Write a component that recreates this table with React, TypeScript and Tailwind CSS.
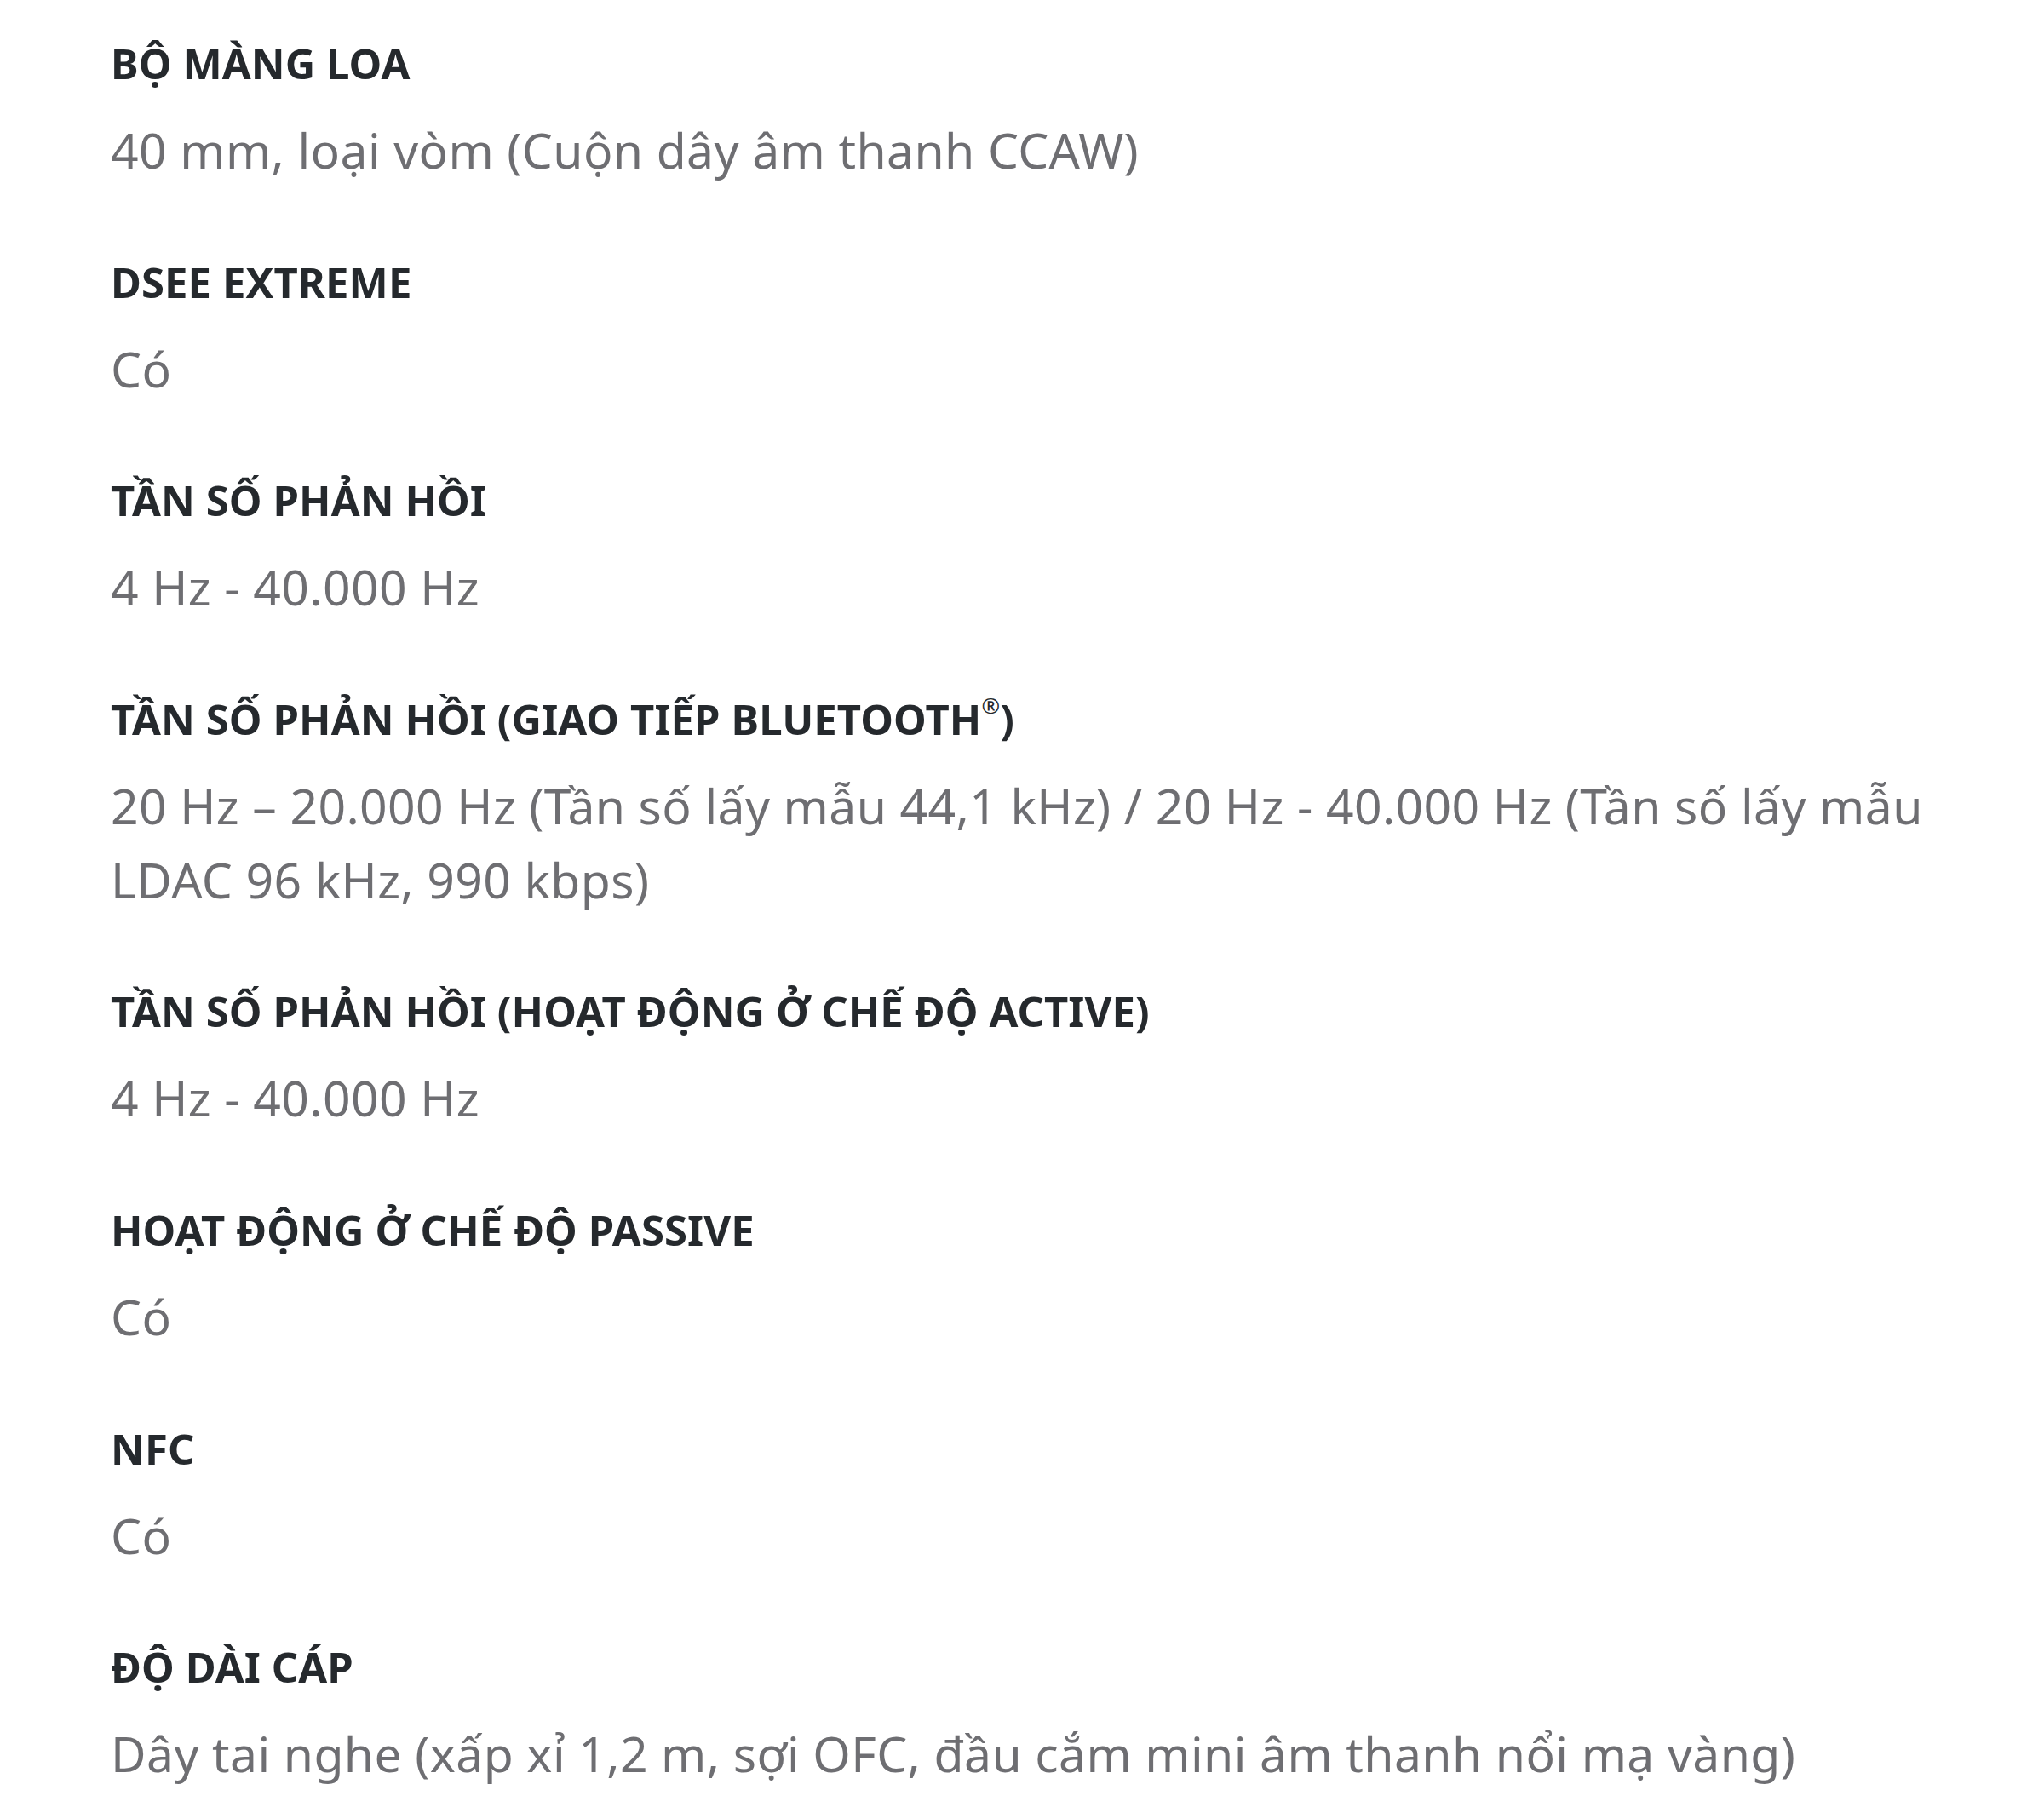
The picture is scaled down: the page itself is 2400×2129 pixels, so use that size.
const specs: { label: React.ReactNode; value: string }[] = [
  { label: "BỘ MÀNG LOA", value: "40 mm, loại vòm (Cuộn dây âm thanh CCAW)" },
  { label: "DSEE EXTREME", value: "Có" },
  { label: "TẦN SỐ PHẢN HỒI", value: "4 Hz - 40.000 Hz" },
  {
    label: (
      <>
        TẦN SỐ PHẢN HỒI (GIAO TIẾP BLUETOOTH<sup className="text-[26px] font-normal align-[12px]">®</sup>)
      </>
    ),
    value:
      "20 Hz – 20.000 Hz (Tần số lấy mẫu 44,1 kHz) / 20 Hz - 40.000 Hz (Tần số lấy mẫu LDAC 96 kHz, 990 kbps)",
  },
  { label: "TẦN SỐ PHẢN HỒI (HOẠT ĐỘNG Ở CHẾ ĐỘ ACTIVE)", value: "4 Hz - 40.000 Hz" },
  { label: "HOẠT ĐỘNG Ở CHẾ ĐỘ PASSIVE", value: "Có" },
  { label: "NFC", value: "Có" },
  { label: "ĐỘ DÀI CÁP", value: "Dây tai nghe (xấp xỉ 1,2 m, sợi OFC, đầu cắm mini âm thanh nổi mạ vàng)" },
];

export default function App() {
  return (
    <div className="min-h-screen bg-white pt-[44px] pl-[130px] font-['Noto_Sans','Open_Sans',sans-serif]">
      <dl className="flex flex-col gap-[80.6px] w-[2200px]">
        {specs.map((s, i) => (
          <div key={i} className="flex flex-col">
            <dt className="text-[49px] leading-[60px] tracking-[0.1px] font-bold text-[#25292d]">{s.label}</dt>
            <dd className="mt-[29px] text-[57px] leading-[87px] tracking-[0.4px] text-[#6e6e72]">{s.value}</dd>
          </div>
        ))}
      </dl>
    </div>
  );
}
